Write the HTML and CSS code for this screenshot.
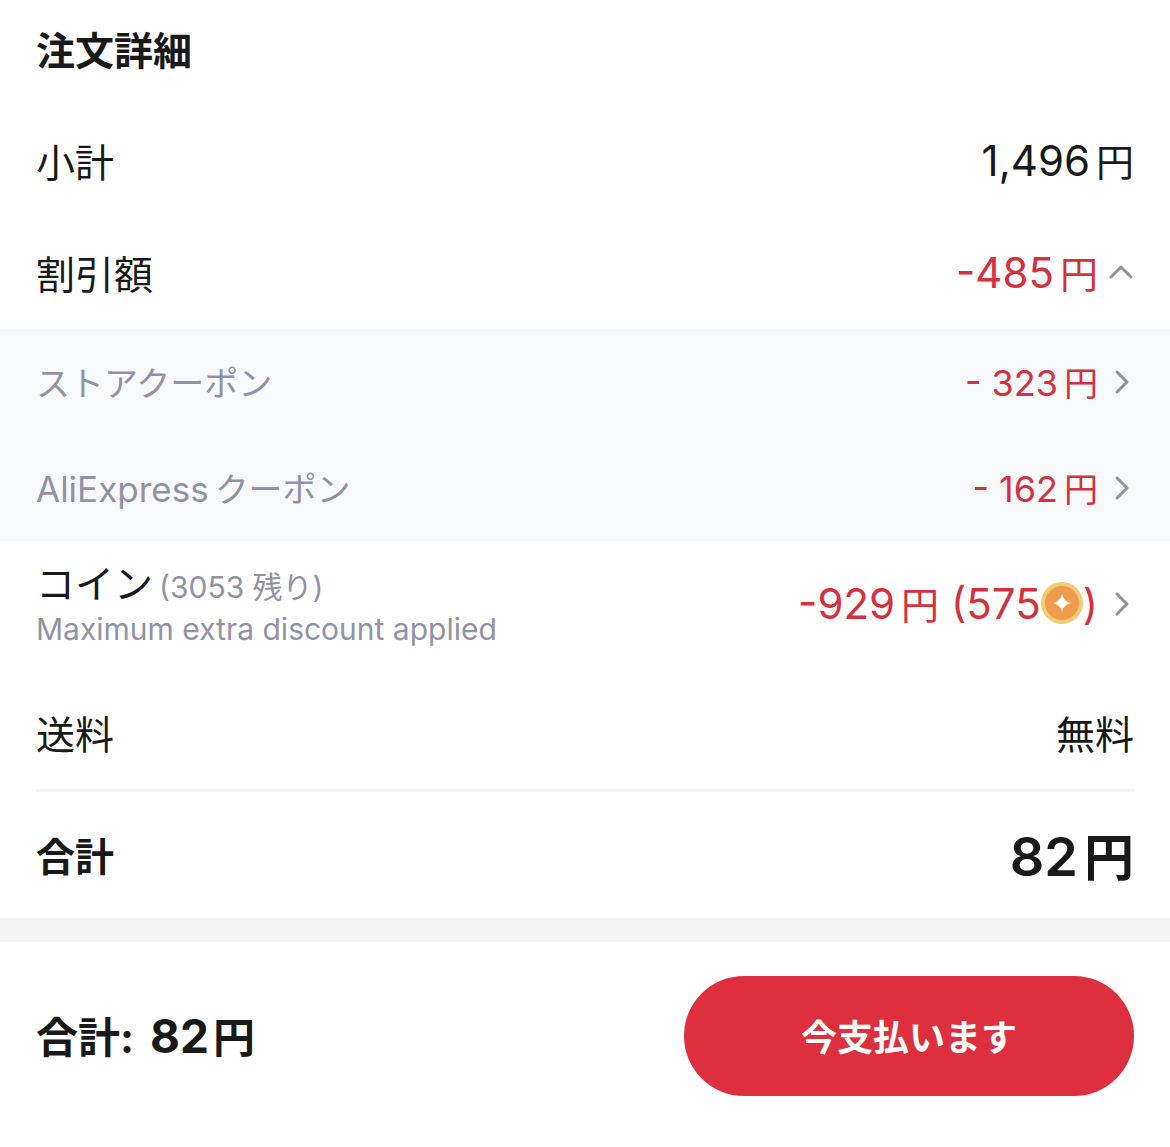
FILE: index.html
```
<!DOCTYPE html>
<html lang="ja">
  <head>
    <meta charset="UTF-8" />
    <meta name="viewport" content="width=device-width, initial-scale=1" />
    <title>注文詳細</title>
    <link rel="stylesheet" href="styles.css">
  </head>
  <body>
    <main class="order">
      <h1 class="title">注文詳細</h1>

      <div class="row">
        <span>小計</span>
        <span class="price">1,496<span class="yen">円</span></span>
      </div>

      <button type="button" class="row discount" aria-expanded="true">
        <span>割引額</span>
        <span class="value">
          <span class="price red">-485<span class="yen">円</span></span>
          <svg class="arrow" viewBox="0 0 24 24"><path d="M1 17 11 7l10 10" /></svg>
        </span>
      </button>

      <div class="coupons">
        <a href="#" class="coupon">
          <span>ストアクーポン</span>
          <span class="value">
            <span class="coupon_price">- 323<span class="yen">円</span></span>
            <svg class="arrow" viewBox="0 0 24 24"><path d="M7 3 17 13 7 23" /></svg>
          </span>
        </a>
        <a href="#" class="coupon">
          <span><span class="brand">AliExpress</span>クーポン</span>
          <span class="value">
            <span class="coupon_price">- 162<span class="yen">円</span></span>
            <svg class="arrow" viewBox="0 0 24 24"><path d="M7 3 17 13 7 23" /></svg>
          </span>
        </a>
      </div>

      <a href="#" class="coin_row">
        <span class="coin_text">
          <span class="coin_name">コイン<span class="remain">(3053 残り)</span></span>
          <span class="note">Maximum extra discount applied</span>
        </span>
        <span class="value">
          <span class="price red">-929<span class="yen">円</span> (575<svg class="coin" viewBox="0 0 42 42"><circle cx="21" cy="21" r="21" fill="#f3cb74" /><circle cx="21" cy="21" r="17" fill="#ee9c4c" /><path d="M21 12Q22.500 19.500 30 21Q22.500 22.500 21 30Q19.500 22.500 12 21Q19.500 19.500 21 12Z" fill="#fff" /></svg>)</span>
          <svg class="arrow" viewBox="0 0 24 24"><path d="M7 3 17 13 7 23" /></svg>
        </span>
      </a>

      <div class="row shipping">
        <span>送料</span>
        <span>無料</span>
      </div>

      <div class="total">
        <span>合計</span>
        <span class="total_price">82<span class="yen">円</span></span>
      </div>
    </main>

    <footer class="pay_bar">
      <p class="pay_total">合計:<span class="pay_price">82<span class="yen">円</span></span></p>
      <button type="button" class="pay_button">今支払います</button>
    </footer>
  </body>
</html>
```
FILE: styles.css
```
* {
  box-sizing: border-box;
}

body {
  margin: 0;
  background-color: #fff;
  color: #191919;
  font-family: Inter, "Noto Sans CJK JP", sans-serif;
  font-size: 39px;
}

a {
  color: inherit;
  text-decoration: none;
}

button {
  border: 0;
  font-family: inherit;
  cursor: pointer;
}

.title {
  margin: 0;
  padding: 0 36px 3px;
  font-size: 39px;
  font-weight: 700;
  line-height: 102px;
}

.row {
  display: flex;
  align-items: center;
  justify-content: space-between;
  width: 100%;
  height: 112px;
  padding: 0 36px 3px;
}

.discount {
  background: none;
  color: inherit;
  font-size: 39px;
}

.price {
  font-size: 42px;
}

.yen {
  margin-left: 6px;
  font-size: 38px;
}

.red {
  color: #d3313e;
}

.value {
  display: flex;
  align-items: center;
  gap: 12px;
}

.arrow {
  width: 24px;
  height: 24px;
  overflow: visible;
  fill: none;
  stroke: #9090a0;
  stroke-width: 3;
  stroke-linecap: round;
  stroke-linejoin: round;
}

.coupons {
  background-color: #f8f9fb;
}

.coupon {
  display: flex;
  align-items: center;
  justify-content: space-between;
  height: 106px;
  padding: 0 36px 2px;
  color: #9292a4;
  font-size: 34px;
}

.brand {
  margin-right: 6px;
  font-size: 35px;
}

.coupon_price {
  color: #d3313e;
  font-size: 36px;
}

.coupon_price .yen {
  font-size: 34px;
}

.coin_row {
  display: flex;
  align-items: center;
  justify-content: space-between;
  height: 126px;
  padding: 0 36px 3px;
}

.coin_text {
  display: flex;
  flex-direction: column;
  padding-top: 6px;
}

.coin_name {
  line-height: 44px;
}

.remain {
  margin-left: 6px;
  color: #9292a4;
  font-size: 30px;
}

.note {
  color: #9292a4;
  font-size: 30px;
  line-height: 40px;
}

.coin {
  width: 42px;
  height: 42px;
  vertical-align: -5px;
}

.shipping {
  margin-top: 10px;
}

.total {
  display: flex;
  align-items: center;
  justify-content: space-between;
  height: 129px;
  margin: 0 36px;
  padding-bottom: 3px;
  border-top: 3px solid #f4f4f4;
  font-weight: 700;
}

.total_price {
  font-size: 54px;
  font-weight: 600;
}

.total_price .yen {
  font-size: 50px;
}

.pay_bar {
  display: flex;
  align-items: center;
  justify-content: space-between;
  padding: 34px 36px;
  border-top: 24px solid #f4f4f4;
}

.pay_total {
  margin: 0;
  padding-bottom: 3px;
  font-size: 42px;
  font-weight: 700;
}

.pay_price {
  margin-left: 16px;
  font-size: 46px;
}

.pay_price .yen {
  margin-left: 4px;
  font-size: 42px;
}

.pay_button {
  width: 450px;
  height: 120px;
  padding: 0 0 3px;
  border-radius: 60px;
  background-color: #dd2f3d;
  color: #fff;
  font-size: 36px;
  font-weight: 600;
}
```
